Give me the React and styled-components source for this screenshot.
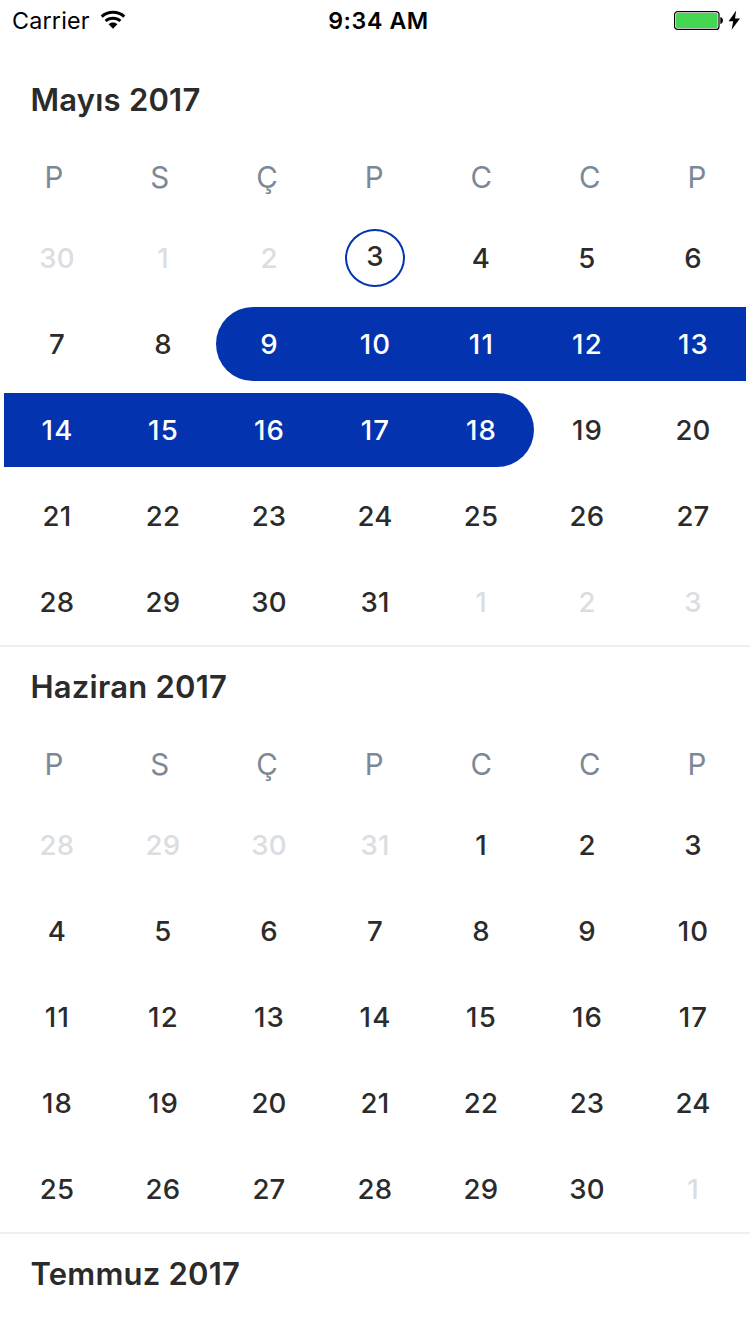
import React from "react";
import styled, { createGlobalStyle } from "styled-components";

const GlobalStyle = createGlobalStyle`
  *, *::before, *::after { box-sizing: border-box; }
  body {
    margin: 0;
    background: #fff;
    font-family: Inter, "Liberation Sans", sans-serif;
  }
`;

const Screen = styled.main`
  width: 750px;
  height: 1334px;
  overflow: hidden;
  background: #fff;
  color: #2b2b2b;
`;

const StatusBar = styled.header`
  display: grid;
  grid-template-columns: 1fr auto 1fr;
  grid-template-rows: 41px;
  align-items: center;
  height: 41px;
  padding: 0 10px 0 12px;
  color: #000;
`;

const StatusGroup = styled.div`
  display: flex;
  align-items: center;
  justify-content: ${({ $end }) => ($end ? "flex-end" : "flex-start")};
  gap: ${({ $end }) => ($end ? "4px" : "10px")};
`;

const Carrier = styled.span`
  font-size: 23.3px;
  line-height: 41px;
  letter-spacing: 0.2px;
`;

const Clock = styled.time`
  padding: 1px 0 0 5px;
  font-size: 23.2px;
  font-weight: 600;
  line-height: 40px;
  letter-spacing: 0.6px;
`;

const Months = styled.div`
  padding-top: 17px;
`;

const Month = styled.section`
  height: 587px;
  border-top: 2px solid ${({ $first }) => ($first ? "transparent" : "#efefef")};
`;

const MonthTitle = styled.h2`
  margin: 0;
  padding: 20px 0 0 30.5px;
  font-size: 31px;
  font-weight: 600;
  line-height: 40px;
  letter-spacing: 0.22px;
`;

const Weekdays = styled.div`
  display: flex;
  justify-content: space-around;
  padding: 37px 0 0 1px;
  color: #7c8896;
  font-size: 29.5px;
  line-height: 41px;
`;

const Weeks = styled.div`
  padding-top: 23px;
`;

const Week = styled.div`
  display: grid;
  grid-template-columns: repeat(7, 106px);
  height: 74px;
  margin: 0 4px 12px;
`;

const radii = { start: "37px 0 0 37px", end: "0 37px 37px 0" };

const Day = styled.div`
  display: flex;
  align-items: center;
  justify-content: center;
  font-size: 27.6px;
  font-weight: 500;
  letter-spacing: ${({ $wide }) => ($wide ? "1.2px" : "0.2px")};
  text-indent: ${({ $wide }) => ($wide ? "1px" : "0")};
  color: ${({ $range, $muted }) => ($range ? "#fff" : $muted ? "#dadde2" : "#2b2b2b")};
  background: ${({ $range }) => ($range ? "#0333ae" : "transparent")};
  border-radius: ${({ $range }) => radii[$range] || 0};
`;

const Today = styled.span`
  display: flex;
  justify-content: center;
  width: 60px;
  height: 58px;
  border: 2px solid #0333ae;
  border-radius: 50%;
  line-height: 51px;
`;

const weekdayLabels = ["P", "S", "Ç", "P", "C", "C", "P"];

const span = (from, to, muted = false) =>
  Array.from({ length: to - from + 1 }, (_, i) => ({ n: from + i, muted }));

const months = [
  {
    title: "Mayıs 2017",
    today: 3,
    range: [9, 18],
    days: [...span(30, 30, true), ...span(1, 2, true), ...span(3, 31), ...span(1, 3, true)],
  },
  {
    title: "Haziran 2017",
    days: [...span(28, 31, true), ...span(1, 30), ...span(1, 1, true)],
  },
  { title: "Temmuz 2017", days: [] },
];

function rangeOf(day, range) {
  if (!range || day.muted || day.n < range[0] || day.n > range[1]) return undefined;
  if (day.n === range[0]) return "start";
  if (day.n === range[1]) return "end";
  return "middle";
}

function toWeeks(days) {
  const weeks = [];
  for (let i = 0; i < days.length; i += 7) weeks.push(days.slice(i, i + 7));
  return weeks;
}

function MonthView({ month, first }) {
  return (
    <Month $first={first}>
      <MonthTitle>{month.title}</MonthTitle>
      {month.days.length > 0 && (
        <>
          <Weekdays>
            {weekdayLabels.map((label, i) => (
              <span key={i}>{label}</span>
            ))}
          </Weekdays>
          <Weeks>
            {toWeeks(month.days).map((week, w) => (
              <Week key={w}>
                {week.map((day, i) => (
                  <Day
                    key={i}
                    $muted={day.muted}
                    $range={rangeOf(day, month.range)}
                    $wide={day.n >= 10 && day.n < 20}
                  >
                    {!day.muted && day.n === month.today ? <Today>{day.n}</Today> : day.n}
                  </Day>
                ))}
              </Week>
            ))}
          </Weeks>
        </>
      )}
    </Month>
  );
}

function WifiIcon() {
  return (
    <svg width="26" height="21" viewBox="0 0 26 21" aria-hidden="true">
      <g fill="none" stroke="#000" strokeWidth="3">
        <path d="M1.7 6.6 C8 0.9 18 0.9 24.3 6.6" />
        <path d="M5.6 11 C9.8 7.2 16.2 7.2 20.4 11" />
      </g>
      <path d="M8.6 14.2 C11 12 15 12 17.4 14.2 L13 18.8 Z" />
    </svg>
  );
}

function BatteryIcon() {
  return (
    <svg width="50" height="21" viewBox="0 0 50 21" aria-hidden="true">
      <rect x="0.6" y="1.6" width="44.4" height="17.8" rx="3" fill="#fff" stroke="#000" strokeWidth="1.2" />
      <rect x="2" y="3" width="41.6" height="15" rx="1.5" fill="#44d551" />
      <path d="M46.3 7 C49.8 7.6 49.8 13.4 46.3 14 Z" />
    </svg>
  );
}

function BoltIcon() {
  return (
    <svg width="12" height="21" viewBox="0 0 12 21" aria-hidden="true">
      <path d="M8.2 0.4 L0.6 11.3 H5.2 L3.6 19.8 L12 8.4 H7 Z" />
    </svg>
  );
}

export default function App() {
  return (
    <>
      <GlobalStyle />
      <Screen>
        <StatusBar>
          <StatusGroup>
            <Carrier>Carrier</Carrier>
            <WifiIcon />
          </StatusGroup>
          <Clock>9:34 AM</Clock>
          <StatusGroup $end>
            <BatteryIcon />
            <BoltIcon />
          </StatusGroup>
        </StatusBar>
        <Months>
          {months.map((month, i) => (
            <MonthView key={month.title} month={month} first={i === 0} />
          ))}
        </Months>
      </Screen>
    </>
  );
}
